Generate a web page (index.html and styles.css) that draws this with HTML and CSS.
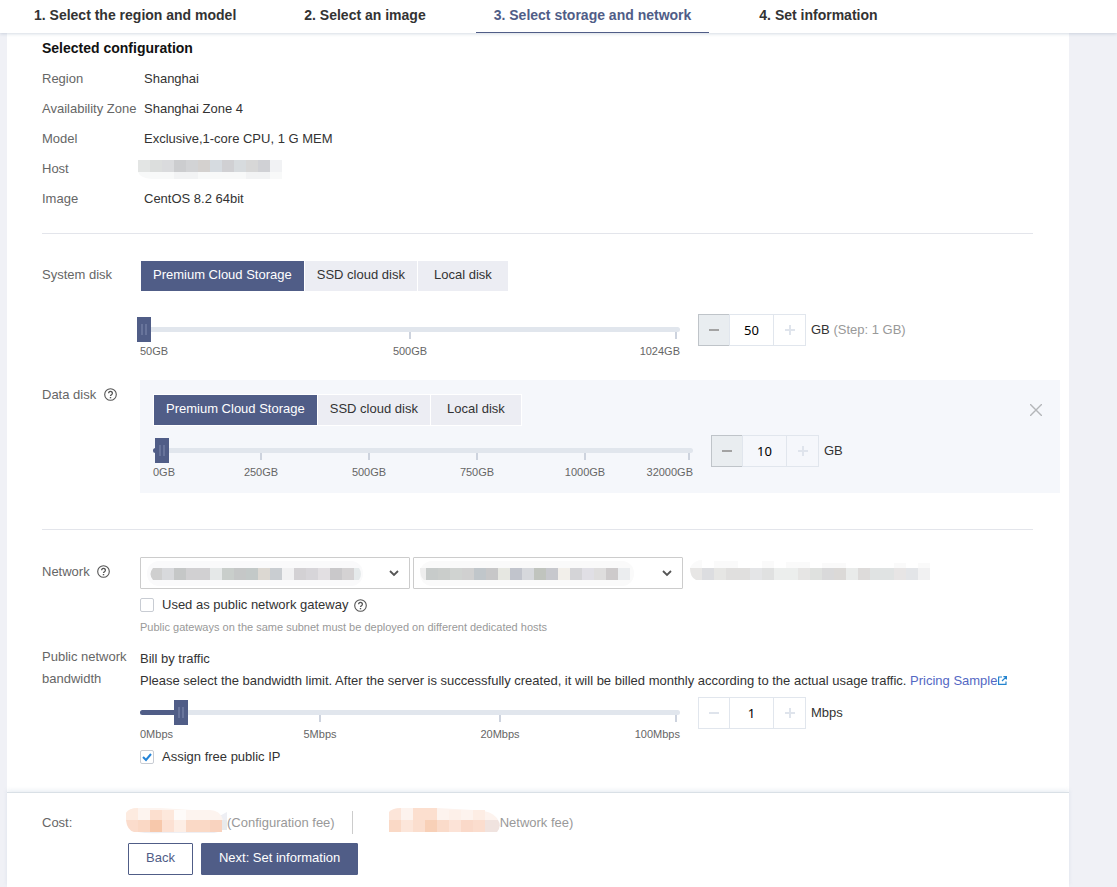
FILE: index.html
```html
<!DOCTYPE html>
<html lang="en">
<head>
  <meta charset="UTF-8" />
  <meta name="viewport" content="width=device-width, initial-scale=1.0" />
  <title>Select storage and network</title>
  <link rel="stylesheet" href="styles.css">
</head>
<body>
  <!-- Shared icons -->
  <svg class="sprite" aria-hidden="true">
    <symbol id="icon-help" viewBox="0 0 13 13">
      <circle cx="6.5" cy="6.5" r="5.8" fill="none" stroke="currentColor" stroke-width="1.1"/>
      <path d="M4.6 5.2a1.9 1.8 0 1 1 2.9 1.5c-.7.4-1 .7-1 1.4" fill="none" stroke="currentColor" stroke-width="1.3"/>
      <path d="M5.8 9h1.4v1.3H5.8z" fill="currentColor"/>
    </symbol>
  </svg>

  <header class="steps">
    <a class="step" href="#region">1. Select the region and model</a>
    <a class="step" href="#image">2. Select an image</a>
    <a class="step active" href="#storage">3. Select storage and network</a>
    <a class="step" href="#info">4. Set information</a>
  </header>

  <main class="sheet">
    <form class="content">
      <h1>Selected configuration</h1>
      <dl class="config">
        <dt>Region</dt><dd>Shanghai</dd>
        <dt>Availability Zone</dt><dd>Shanghai Zone 4</dd>
        <dt>Model</dt><dd>Exclusive,1-core CPU, 1 G MEM</dd>
        <dt>Host</dt>
        <dd>
          <svg class="mask mask-host" width="144" height="20" aria-hidden="true">
            <path d="M0 12h144v7H14Q2 18 0 12z" fill="#f8f9f9"/>
            <path d="M36 12h24v7H36zM108 12h24v7h-24z" fill="#f2f3f4"/>
            <rect width="12" height="12" fill="#e3e5e4"/>
            <rect x="12" width="12" height="12" fill="#dcdedd"/>
            <rect x="24" width="12" height="12" fill="#dadbdd"/>
            <rect x="36" width="12" height="12" fill="#cccdcf"/>
            <rect x="48" width="12" height="12" fill="#d2d3d5"/>
            <rect x="60" width="12" height="12" fill="#d4d1cf"/>
            <rect x="72" width="12" height="12" fill="#d6dbe0"/>
            <rect x="84" width="12" height="12" fill="#d0d0d3"/>
            <rect x="96" width="12" height="12" fill="#d7dbde"/>
            <rect x="108" width="12" height="12" fill="#d7d7d7"/>
            <rect x="120" width="12" height="12" fill="#d0d1d5"/>
            <rect x="132" width="12" height="12" fill="#f1f2f4"/>
          </svg>
        </dd>
        <dt>Image</dt><dd>CentOS 8.2 64bit</dd>
      </dl>

      <hr>

      <!-- System disk -->
      <section class="row system">
        <div class="row-label">System disk</div>
        <div class="row-body">
          <div class="segments">
            <button type="button" class="active">Premium Cloud Storage</button>
            <button type="button">SSD cloud disk</button>
            <button type="button">Local disk</button>
          </div>
          <div class="amount">
            <div class="slider">
              <div class="rail"></div>
              <input type="range" min="0" max="100" value="0" step="any" aria-label="System disk size">
              <ul class="scale"><li>50GB</li><li>500GB</li><li>1024GB</li></ul>
            </div>
            <div class="stepper">
              <button type="button" class="minus hover" aria-label="Decrease"></button>
              <input type="text" value="50" aria-label="System disk size in GB">
              <button type="button" class="plus" aria-label="Increase"></button>
            </div>
            <span class="unit">GB <span class="muted">(Step: 1 GB)</span></span>
          </div>
        </div>
      </section>

      <!-- Data disk -->
      <section class="row">
        <div class="row-label">Data disk <svg class="help"><use href="#icon-help"/></svg></div>
        <div class="row-body disk-box">
          <div class="disk-head">
            <div class="segments">
              <button type="button" class="active">Premium Cloud Storage</button>
              <button type="button">SSD cloud disk</button>
              <button type="button">Local disk</button>
            </div>
            <button type="button" class="close" aria-label="Remove disk">
              <svg width="12" height="12" viewBox="0 0 12 12"><path d="M0 0l12 12M12 0L0 12" stroke="#b4b6b9" stroke-width="1.4"/></svg>
            </button>
          </div>
          <div class="amount">
            <div class="slider">
              <div class="rail"><div class="fill" style="width: 1%"></div></div>
              <input type="range" min="0" max="100" value="0.94" step="any" aria-label="Data disk size">
              <ul class="scale"><li>0GB</li><li>250GB</li><li>500GB</li><li>750GB</li><li>1000GB</li><li>32000GB</li></ul>
            </div>
            <div class="stepper">
              <button type="button" class="minus hover" aria-label="Decrease"></button>
              <input type="text" value="10" aria-label="Data disk size in GB">
              <button type="button" class="plus" aria-label="Increase"></button>
            </div>
            <span class="unit">GB</span>
          </div>
        </div>
      </section>

      <hr class="after-disks">

      <!-- Network -->
      <section class="row">
        <div class="row-label"><label for="vpc">Network</label> <svg class="help"><use href="#icon-help"/></svg></div>
        <div class="row-body">
          <div class="selects">
            <div class="select">
              <select id="vpc"><option></option></select>
              <svg class="mask mask-select" width="216" height="26" aria-hidden="true">
                <rect width="216" height="25" rx="12" fill="#fafafb"/>
                <path d="M15 7v12H6q-5-6 0-12z" fill="#cfcfcf"/>
                <rect x="15" y="7" width="12" height="12" fill="#d8d9dc"/>
                <rect x="27" y="7" width="12" height="12" fill="#c5c7c7"/>
                <rect x="39" y="7" width="24" height="12" fill="#d1d0d2"/>
                <rect x="63" y="7" width="12" height="12" fill="#e5e8e8"/>
                <rect x="75" y="7" width="12" height="12" fill="#c9cecb"/>
                <rect x="87" y="7" width="12" height="12" fill="#c5c7c7"/>
                <rect x="99" y="7" width="12" height="12" fill="#c3c9c8"/>
                <rect x="111" y="7" width="12" height="12" fill="#dcd8d2"/>
                <rect x="123" y="7" width="12" height="12" fill="#c9cdd1"/>
                <rect x="135" y="7" width="12" height="12" fill="#f1f1f2"/>
                <rect x="147" y="7" width="12" height="12" fill="#d3d1d4"/>
                <rect x="159" y="7" width="12" height="12" fill="#d7d5d9"/>
                <rect x="171" y="7" width="12" height="12" fill="#e2dfe2"/>
                <rect x="183" y="7" width="12" height="12" fill="#c9c8ca"/>
                <rect x="195" y="7" width="12" height="12" fill="#d4d2d3"/>
                <path d="M207 7h5q4 6 0 12h-5z" fill="#e5eaeb"/>
              </svg>
            </div>
            <div class="select">
              <select aria-label="Subnet"><option></option></select>
              <svg class="mask mask-select" width="216" height="26" aria-hidden="true">
                <rect width="214" height="25" rx="12" fill="#fafafa"/>
                <path d="M0 7h6v12H4Q0 16 0 7z" fill="#eeeeee"/>
                <rect x="6" y="7" width="12" height="12" fill="#c7cbca"/>
                <rect x="18" y="7" width="12" height="12" fill="#cacdcb"/>
                <rect x="30" y="7" width="12" height="12" fill="#d0d3d1"/>
                <rect x="42" y="7" width="12" height="12" fill="#d0d0d0"/>
                <rect x="54" y="7" width="12" height="12" fill="#c0c6ca"/>
                <rect x="66" y="7" width="12" height="12" fill="#c7c7c8"/>
                <rect x="78" y="7" width="12" height="12" fill="#e6e7e1"/>
                <rect x="90" y="7" width="12" height="12" fill="#c1c4cc"/>
                <rect x="102" y="7" width="12" height="12" fill="#d6d8dc"/>
                <rect x="114" y="7" width="24" height="12" fill="#c0c4be"/>
                <rect x="126" y="7" width="12" height="12" fill="#c7c8cd"/>
                <rect x="138" y="7" width="12" height="12" fill="#f2efea"/>
                <rect x="150" y="7" width="12" height="12" fill="#d4d4d7"/>
                <rect x="162" y="7" width="12" height="12" fill="#e0dfe5"/>
                <rect x="174" y="7" width="12" height="12" fill="#dedddd"/>
                <rect x="186" y="7" width="12" height="12" fill="#cdcacb"/>
                <rect x="198" y="7" width="12" height="12" fill="#ebedef"/>
              </svg>
            </div>
            <svg class="mask mask-subnet" width="240" height="20" aria-hidden="true">
              <path d="M0 8Q4 0 12 0v8zM24 1h24v7H24zM72 1h12v7H72zM96 2h24v6H96zM132 3h24v5h-24zM204 3h12v5h-12zM228 3h12v5h-12z" fill="#fafafa"/>
              <path d="M0 8h12v12H6Q0 17 0 8z" fill="#e7e6e5"/>
              <rect x="12" y="8" width="12" height="12" fill="#dcdde0"/>
              <rect x="24" y="8" width="12" height="12" fill="#e6e6e4"/>
              <rect x="36" y="8" width="24" height="12" fill="#e0dfde"/>
              <rect x="60" y="8" width="12" height="12" fill="#e4e5e7"/>
              <rect x="72" y="8" width="12" height="12" fill="#e0e1e1"/>
              <rect x="84" y="8" width="24" height="12" fill="#eceeed"/>
              <rect x="108" y="8" width="12" height="12" fill="#e6e5e4"/>
              <rect x="120" y="8" width="12" height="12" fill="#dfe1df"/>
              <rect x="132" y="8" width="12" height="12" fill="#d9d9da"/>
              <rect x="144" y="8" width="12" height="12" fill="#dbd9d7"/>
              <rect x="156" y="8" width="12" height="12" fill="#e9ebea"/>
              <rect x="168" y="8" width="12" height="12" fill="#dddbda"/>
              <rect x="180" y="8" width="24" height="12" fill="#e0e3e3"/>
              <rect x="204" y="8" width="12" height="12" fill="#e7e5e5"/>
              <rect x="216" y="8" width="12" height="12" fill="#e3e5e8"/>
              <rect x="228" y="8" width="12" height="12" fill="#f1f1f2"/>
            </svg>
          </div>
          <div class="check">
            <input type="checkbox" id="gateway">
            <label for="gateway">Used as public network gateway</label>
            <svg class="help"><use href="#icon-help"/></svg>
          </div>
          <p class="hint">Public gateways on the same subnet must be deployed on different dedicated hosts</p>
        </div>
      </section>

      <!-- Bandwidth -->
      <section class="row bandwidth">
        <div class="row-label">Public network bandwidth</div>
        <div class="row-body">
          <p>Bill by traffic</p>
          <p>Please select the bandwidth limit. After the server is successfully created, it will be billed monthly according to the actual usage traffic.
            <a class="pricing" href="#pricing">Pricing Sample<svg width="9" height="9" viewBox="0 0 9 9"><path d="M4 1H.6v7.4H8V5.5M5.4.6h3v3M8.2.8L4 5" fill="none" stroke="#2484cf" stroke-width="1.2"/></svg></a></p>
          <div class="amount">
            <div class="slider">
              <div class="rail"><div class="fill" style="width: 7%"></div></div>
              <input type="range" min="0" max="100" value="7" step="any" aria-label="Bandwidth limit">
              <ul class="scale"><li>0Mbps</li><li>5Mbps</li><li>20Mbps</li><li>100Mbps</li></ul>
            </div>
            <div class="stepper">
              <button type="button" class="minus" aria-label="Decrease"></button>
              <input type="text" value="1" aria-label="Bandwidth in Mbps">
              <button type="button" class="plus" aria-label="Increase"></button>
            </div>
            <span class="unit">Mbps</span>
          </div>
          <div class="check">
            <input type="checkbox" id="public-ip" checked>
            <label for="public-ip">Assign free public IP</label>
          </div>
        </div>
      </section>
    </form>

    <footer class="footer">
      <div class="cost">
        <span class="cost-label">Cost:</span>
        <svg class="mask" width="101" height="26" aria-hidden="true">
          <path d="M12 24q10 2 24 1h52q9-1 13-9V4L86 12z" fill="#eeeff4"/>
          <path d="M0 12V5q3-5 12-5h22l32 2h18q10 0 13 10z" fill="#fdf4ef"/>
          <path d="M0 12V5q3-5 12-5v12z" fill="#fdebe0"/>
          <rect x="24" y="2" width="12" height="10" fill="#fcdfcf"/>
          <rect x="36" y="2" width="12" height="10" fill="#fde8dc"/>
          <rect x="48" y="2" width="12" height="10" fill="#fefbf9"/>
          <path d="M0 12h12v12H8Q1 22 0 12z" fill="#fbdccc"/>
          <rect x="12" y="12" width="12" height="12" fill="#fad8c5"/>
          <rect x="24" y="12" width="12" height="12" fill="#f7c8ab"/>
          <rect x="36" y="12" width="12" height="12" fill="#fce1d3"/>
          <rect x="48" y="12" width="12" height="12" fill="#fdeee5"/>
          <rect x="60" y="12" width="24" height="12" fill="#fad9c6"/>
          <rect x="84" y="12" width="12" height="12" fill="#f9d3bf"/>
          <rect x="96" y="12" width="5" height="10" fill="#e8eaec"/>
        </svg>
        <span class="fee">(Configuration fee)</span>
        <span class="divider"></span>
        <svg class="mask" width="111" height="26" aria-hidden="true">
          <path d="M0 12V4q4-4 12-4h36l36 2q20 0 25 10z" fill="#fdf3ee"/>
          <path d="M0 12V4q4-4 12-4v12z" fill="#fce5d9"/>
          <rect x="24" width="24" height="12" fill="#fcdfcf"/>
          <rect x="60" y="2" width="12" height="10" fill="#fdf0e9"/>
          <rect x="84" y="2" width="12" height="10" fill="#fdede4"/>
          <rect y="12" width="12" height="12" fill="#fad9c6"/>
          <rect x="12" y="12" width="12" height="12" fill="#fce6da"/>
          <rect x="24" y="12" width="12" height="12" fill="#fbdece"/>
          <rect x="36" y="12" width="12" height="12" fill="#f8d0b7"/>
          <rect x="48" y="12" width="12" height="12" fill="#fadbca"/>
          <rect x="60" y="12" width="12" height="12" fill="#fce3d7"/>
          <rect x="72" y="12" width="12" height="12" fill="#fad9c9"/>
          <rect x="84" y="12" width="12" height="12" fill="#fbddce"/>
          <path d="M96 12h13q4 6-1 12H96z" fill="#f0e3df"/>
        </svg>
        <span class="fee">Network fee)</span>
      </div>
      <div class="actions">
        <button type="button" class="btn">Back</button>
        <button type="button" class="btn btn-primary">Next: Set information</button>
      </div>
    </footer>
  </main>
</body>
</html>
```
FILE: styles.css
```css
:root {
  --bg: #f0f1f6;
  --text: #333333;
  --label: #666666;
  --muted: #999999;
  --accent: #505d87;
  --rail: #e1e6ed;
  --line: #e3e5eb;
  --segment: #ecedf3;
  --box: #f5f7fb;
}

* {
  box-sizing: border-box;
}

body {
  margin: 0;
  min-height: 100vh;
  display: flex;
  flex-direction: column;
  background: var(--bg);
  color: var(--text);
  font: 13px/22px "Liberation Sans", Arial, sans-serif;
}

h1, p, ul, dl, dd {
  margin: 0;
  padding: 0;
}

button, input, select {
  font: inherit;
  color: inherit;
  margin: 0;
}

button {
  cursor: pointer;
}

.sprite {
  display: none;
}

.mask {
  display: block;
  flex: none;
}

.muted {
  color: var(--muted);
}

/* Steps */
.steps {
  position: relative;
  z-index: 1;
  display: flex;
  gap: 32px;
  padding-left: 16px;
  background: #fff;
  box-shadow: 0 1px 3px rgba(120, 140, 170, 0.3);
}

.step {
  padding: 0 18px;
  height: 33px;
  line-height: 30px;
  font-size: 14px;
  font-weight: bold;
  color: var(--text);
  text-decoration: none;
}

.step.active {
  color: var(--accent);
  border-bottom: 1px solid var(--accent);
}

/* Page */
.sheet {
  flex: 1;
  display: flex;
  flex-direction: column;
  margin: 0 48px 0 7px;
  background: #fff;
}

.content {
  flex: 1;
  padding: 0 9px 24px 35px;
}

h1 {
  font-size: 14px;
  line-height: 30px;
  color: #111;
}

.config {
  display: grid;
  grid-template-columns: 102px 1fr;
  grid-auto-rows: 30px;
  margin-top: 1px;
  line-height: 30px;
}

.config dt {
  color: var(--label);
}

.mask-host {
  margin: 6px 0 0 -6px;
}

hr {
  height: 1px;
  margin: 19px 27px 26px 0;
  border: 0;
  background: var(--line);
}

hr.after-disks {
  margin: 36px 27px 27px 0;
}

.row {
  display: flex;
}

.row.system {
  margin-bottom: 22px;
}

.row.bandwidth {
  margin-top: 7px;
}

.row-label {
  flex: 0 0 98px;
  padding: 1px 8px 0 0;
  line-height: 28px;
  color: var(--label);
}

.bandwidth .row-label {
  line-height: 22px;
}

.bandwidth .row-body {
  padding-top: 3px;
}

.row-body {
  flex: 1;
  min-width: 0;
}

.help {
  width: 13px;
  height: 13px;
  margin-left: 4px;
  vertical-align: -2px;
  color: #555;
}

/* Disk type */
.segments {
  display: inline-flex;
  gap: 1px;
  padding: 1px;
  background: #fff;
  vertical-align: top;
}

.segments button {
  min-width: 90px;
  height: 30px;
  padding: 0 12px 3px;
  border: 0;
  background: var(--segment);
}

.segments .active {
  background: var(--accent);
  color: #fff;
}

.disk-box {
  padding: 14px 13px;
  background: var(--box);
}

.disk-head {
  display: flex;
  justify-content: space-between;
  align-items: center;
}

.close {
  display: flex;
  margin-right: 5px;
  padding: 0;
  border: 0;
  background: none;
}

/* Slider and stepper */
.amount {
  display: flex;
  align-items: flex-start;
  margin-top: 22px;
}

.disk-box .amount {
  margin-top: 9px;
}

.bandwidth .amount {
  margin-top: 5px;
}

.slider {
  flex: 0 1 540px;
  display: grid;
  grid-template-rows: 25px;
  margin-top: 3px;
}

.rail {
  grid-area: 1 / 1;
  align-self: center;
  height: 5px;
  border-radius: 3px;
  overflow: hidden;
  background: var(--rail);
}

.fill {
  height: 100%;
  background: var(--accent);
}

.slider input {
  grid-area: 1 / 1;
  z-index: 1;
  width: auto;
  height: 25px;
  margin: 0 -3px;
  appearance: none;
  background: none;
}

.slider input::-webkit-slider-thumb {
  appearance: none;
  width: 14px;
  height: 25px;
  background:
    linear-gradient(#68749b, #68749b) 4px 7px / 2px 11px no-repeat,
    linear-gradient(#68749b, #68749b) 8px 7px / 2px 11px no-repeat,
    var(--accent);
}

.scale {
  display: flex;
  justify-content: space-between;
  margin-top: -10px;
  list-style: none;
  font-size: 11px;
  line-height: 14px;
  color: var(--label);
}

.scale li {
  display: flex;
  flex-direction: column;
  align-items: center;
  width: 0;
  white-space: nowrap;
}

.scale li::before {
  content: "";
  width: 2px;
  height: 7px;
  margin-bottom: 5px;
  background: #cdd3de;
}

.scale li:first-child {
  align-items: flex-start;
}

.scale li:first-child::before {
  background: none;
}

.scale li:last-child {
  align-items: flex-end;
}

.scale li:last-child::before {
  margin-right: 3px;
}

.stepper {
  flex: none;
  display: flex;
  height: 32px;
  margin-left: 18px;
  border: 1px solid var(--rail);
}

.stepper input {
  width: 45px;
  padding: 0;
  border: 1px solid var(--rail);
  border-width: 0 1px;
  background: none;
  color: #000;
  font-family: "Noto Sans", sans-serif;
  text-align: center;
}

.stepper button {
  width: 31px;
  padding: 0;
  border: 0;
  color: #dfe4ec;
  background:
    linear-gradient(currentColor, currentColor) center / 10px 2px no-repeat;
}

.stepper .minus {
  width: 30px;
}

.stepper .plus {
  background:
    linear-gradient(currentColor, currentColor) center / 10px 2px no-repeat,
    linear-gradient(currentColor, currentColor) center / 2px 10px no-repeat;
}

.stepper .hover {
  width: 31px;
  margin: -1px 0 -1px -1px;
  border: 1px solid #bfc4c9;
  border-right: 0;
  color: #a3a3a3;
  background-color: #e9edf0;
}

.unit {
  margin-left: 5px;
  line-height: 31px;
}

/* Network */
.selects {
  display: flex;
  gap: 3px;
}

.select {
  position: relative;
  flex: 0 1 270px;
}

.select select {
  display: block;
  width: 100%;
  height: 32px;
  border: 1px solid #ccc;
  border-radius: 1px;
  appearance: none;
  background: #fff url("data:image/svg+xml,%3Csvg xmlns='http://www.w3.org/2000/svg' width='10' height='7'%3E%3Cpath d='M1 1l4 4 4-4' fill='none' stroke='%23555' stroke-width='1.8'/%3E%3C/svg%3E") right 10px center no-repeat;
}

/* sits over the select's value */
.mask-select {
  position: absolute;
  left: 7px;
  top: 4px;
}

.mask-subnet {
  margin: 3px 0 0 4px;
}

.check {
  display: flex;
  align-items: center;
  margin-top: 5px;
}

.check input {
  width: 14px;
  height: 14px;
  margin-right: 8px;
  border: 1px solid #c8ccd3;
  border-radius: 2px;
  appearance: none;
  background: #fff;
}

.check input:checked {
  background: #fff url("data:image/svg+xml,%3Csvg xmlns='http://www.w3.org/2000/svg' width='10' height='9'%3E%3Cpath d='M1 4l3 3 5-6' fill='none' stroke='%232484d8' stroke-width='2'/%3E%3C/svg%3E") center no-repeat;
}

.check .help {
  margin-left: 6px;
}

.hint {
  font-size: 11px;
  color: var(--muted);
}

.pricing {
  color: #5468c4;
  text-decoration: none;
}

.pricing svg {
  margin-left: 1px;
}

/* Footer */
.footer {
  padding: 15px 35px 12px;
  border-top: 1px solid #d9e0e6;
  box-shadow: 0 -2px 4px rgba(120, 150, 180, 0.15);
}

.cost {
  display: flex;
  align-items: flex-end;
}

.cost-label {
  width: 84px;
  color: var(--label);
}

.fee {
  color: var(--muted);
}

.divider {
  width: 1px;
  height: 23px;
  margin: 0 36px 0 17px;
  background: #ccc;
}

.actions {
  display: flex;
  gap: 8px;
  margin: 9px 0 0 86px;
}

.btn {
  height: 32px;
  padding: 0 17px 3px;
  border: 1px solid var(--accent);
  border-radius: 1px;
  background: #fff;
  color: var(--accent);
}

.btn-primary {
  background: var(--accent);
  color: #fff;
}
```
